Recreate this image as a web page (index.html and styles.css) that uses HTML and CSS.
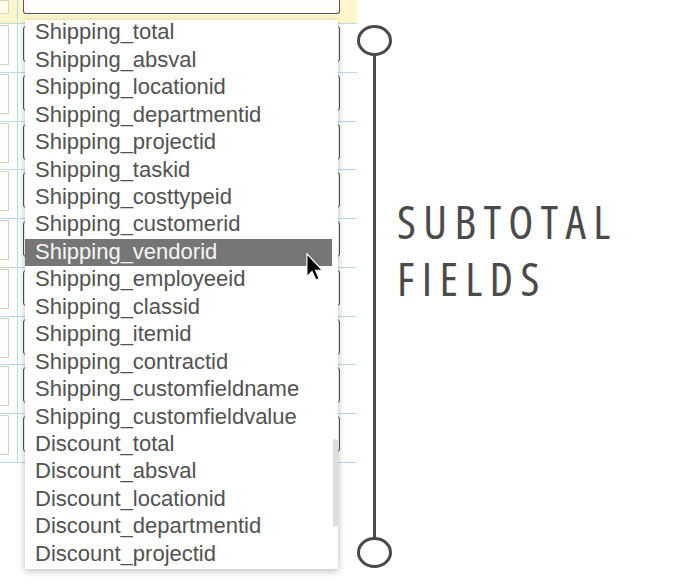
FILE: index.html
```html
<!DOCTYPE html>
<html lang="en">
<head>
    <meta charset="UTF-8">
    <meta name="viewport" content="width=device-width, initial-scale=1.0">
    <title>Subtotal fields</title>
    <link rel="stylesheet" href="styles.css">
</head>
<body>
    <div class="sheet">
        <div class="row head">
            <div class="cell first"><div class="note"></div></div>
            <div class="cell"><div class="select"></div></div>
        </div>
        <div class="row"><div class="cell first"><div class="note"></div></div><div class="cell"><div class="field"></div></div></div>
        <div class="row"><div class="cell first"><div class="note"></div></div><div class="cell"><div class="field"></div></div></div>
        <div class="row"><div class="cell first"><div class="note"></div></div><div class="cell"><div class="field"></div></div></div>
        <div class="row"><div class="cell first"><div class="note"></div></div><div class="cell"><div class="field"></div></div></div>
        <div class="row"><div class="cell first"><div class="note"></div></div><div class="cell"><div class="field"></div></div></div>
        <div class="row"><div class="cell first"><div class="note"></div></div><div class="cell"><div class="field"></div></div></div>
        <div class="row"><div class="cell first"><div class="note"></div></div><div class="cell"><div class="field"></div></div></div>
        <div class="row"><div class="cell first"><div class="note"></div></div><div class="cell"><div class="field"></div></div></div>
        <div class="row"><div class="cell first"><div class="note"></div></div><div class="cell"><div class="field"></div></div></div>

        <!-- open dropdown of the select above -->
        <div class="dropdown">
            <ul class="options">
                <li>Shipping_total</li>
                <li>Shipping_absval</li>
                <li>Shipping_locationid</li>
                <li>Shipping_departmentid</li>
                <li>Shipping_projectid</li>
                <li>Shipping_taskid</li>
                <li>Shipping_costtypeid</li>
                <li>Shipping_customerid</li>
                <li class="active">Shipping_vendorid</li>
                <li>Shipping_employeeid</li>
                <li>Shipping_classid</li>
                <li>Shipping_itemid</li>
                <li>Shipping_contractid</li>
                <li>Shipping_customfieldname</li>
                <li>Shipping_customfieldvalue</li>
                <li>Discount_total</li>
                <li>Discount_absval</li>
                <li>Discount_locationid</li>
                <li>Discount_departmentid</li>
                <li>Discount_projectid</li>
            </ul>
            <div class="thumb"></div>
        </div>

        <svg class="pointer" width="18" height="28" viewBox="0 0 12 19">
            <path d="M0.5 0.5 V16 L4 12.6 L6.6 18.4 L8.9 17.4 L6.4 11.7 H11 Z" fill="#000" stroke="#fff" stroke-width="0.8"/>
        </svg>
    </div>

    <div class="callout">
        <svg class="bracket" width="40" height="584" viewBox="0 0 40 584">
            <line x1="17.5" y1="55" x2="17.5" y2="539" stroke="#4a4a4a" stroke-width="3"/>
            <ellipse cx="17.5" cy="40.5" rx="16" ry="14" fill="none" stroke="#4a4a4a" stroke-width="3"/>
            <ellipse cx="17.5" cy="552.5" rx="16" ry="14" fill="none" stroke="#4a4a4a" stroke-width="3"/>
        </svg>
        <div class="label">SUBTOTAL<br>FIELDS</div>
    </div>
</body>
</html>
```

FILE: styles.css
```css
body {
    margin: 0;
    width: 677px;
    height: 584px;
    overflow: hidden;
    background: #ffffff;
    display: flex;
    font-family: 'Liberation Sans', Arial, sans-serif;
}
.sheet {
    position: relative;
    width: 357px;
    flex-shrink: 0;
}
.row {
    display: flex;
    height: 48.78px;
    box-sizing: border-box;
    border-bottom: 1px solid #b8dcef;
}
.row.head {
    height: 24px;
    background: #fdf6cb;
}
.cell {
    flex: 1;
    overflow: hidden;
}
.cell.first {
    flex: 0 0 18px;
    box-sizing: border-box;
    border-right: 1px solid #b8dcef;
}
.note {
    width: 30px;
    height: 40px;
    margin: 1px 0 0 -21px;
    box-sizing: border-box;
    border: 1px solid #d8d2b6;
    background: #ffffff;
}
.head .note {
    height: 14px;
    margin-top: 0;
    background: #fefbe8;
}
.field {
    width: 317px;
    height: 36px;
    margin: 2px 0 0 5px;
    box-sizing: border-box;
    border: 1px solid #555555;
    border-radius: 3px;
    background: #ffffff;
}
.select {
    width: 317px;
    height: 14px;
    margin-left: 5px;
    box-sizing: border-box;
    border: 1px solid #555555;
    border-top: none;
    border-radius: 0 0 3px 3px;
    background: #ffffff;
}
.dropdown {
    position: absolute;
    left: 25px;
    top: 20px;
    width: 313px;
    height: 549px;
    overflow: hidden;
    background: #ffffff;
    box-shadow: 0 2px 7px rgba(0, 0, 0, 0.28);
}
.options {
    list-style: none;
    margin: -0.6px 0 0;
    padding: 0;
    width: 307px;
}
.options li {
    height: 27.45px;
    box-sizing: border-box;
    padding: 1px 0 3.35px 10px;
    line-height: 23.1px;
    font-size: 22px;
    color: #525252;
    white-space: nowrap;
}
.options li.active {
    background: #767676;
    color: #f6f6f6;
}
.thumb {
    position: absolute;
    left: 308px;
    top: 419px;
    width: 5px;
    height: 88px;
    border-radius: 3px;
    background: #dedede;
}
.pointer {
    position: absolute;
    left: 306px;
    top: 253px;
}
.callout {
    display: flex;
    align-items: flex-start;
}
.bracket {
    display: block;
    flex-shrink: 0;
}
.label {
    margin-top: 193.4px;
    font-family: 'Open Sans', sans-serif;
    font-stretch: 75%;
    font-size: 46px;
    line-height: 57px;
    letter-spacing: 7.4px;
    color: #4a4a4a;
}
```
